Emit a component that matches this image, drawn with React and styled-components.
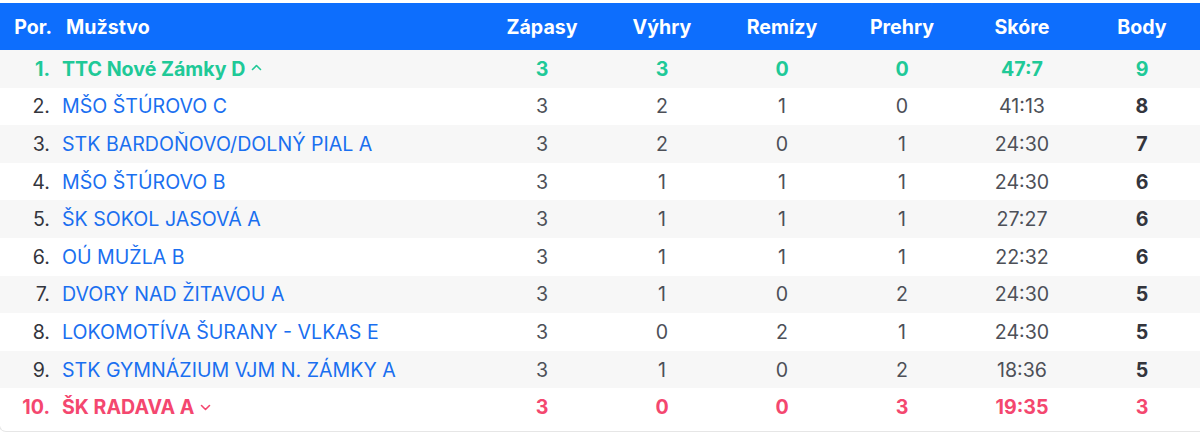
import { memo } from 'react';
import styled, { createGlobalStyle } from 'styled-components';

const GlobalStyle = createGlobalStyle`
    body {
        margin: 0;
        background: #ffffff;
        font-family: Inter, "Noto Sans", sans-serif;
        overflow: hidden;
    }
`;

const COLS = '52px 429px repeat(6, 120px)';

const StyledCard = styled.div`
    width: 1212px;
    margin-top: 3px;
    padding-bottom: 5px;
    border: 1px solid #e6e6e6;
    border-top: none;
    border-radius: 0 0 7px 7px;
    box-sizing: border-box;
    margin-left: -1px;
    overflow: hidden;
`;

const StyledHead = styled.div`
    display: grid;
    grid-template-columns: ${COLS};
    height: 47px;
    align-items: center;
    background-color: #0d6efd;
    color: #ffffff;
    font-weight: 700;
    font-size: 19.6px;
    padding-left: 1px;
`;

const HeadCell = styled.div`
    text-align: ${(p) => p.$align || 'center'};
    padding-right: ${(p) => (p.$align === 'right' ? '1px' : '0')};
    padding-left: ${(p) => (p.$align === 'left' ? '13px' : '0')};
    white-space: nowrap;
`;

const StyledRow = styled.div`
    display: grid;
    grid-template-columns: ${COLS};
    height: 37.6px;
    align-items: center;
    padding-left: 1px;
    font-size: 19.6px;
    background-color: ${(p) => (p.$striped ? '#f7f7f7' : '#ffffff')};
    color: ${(p) => p.$tone || '#4d5058'};
    font-weight: ${(p) => (p.$tone ? 700 : 400)};
`;

const Pos = styled.div`
    text-align: right;
    padding-right: 3px;
    white-space: nowrap;
    color: ${(p) => p.$tone || '#33353d'};
`;

const Team = styled.div`
    padding-left: 9px;
    display: flex;
    align-items: center;
    gap: 6px;
    color: ${(p) => p.$tone || '#1a6ff0'};
    white-space: nowrap;
`;

const Cell = styled.div`
    text-align: center;
`;

const Points = styled.div`
    text-align: center;
    font-weight: 700;
    color: ${(p) => p.$tone || '#33353d'};
`;

const Chevron = ({ up, color }) => (
    <svg width="11" height="7" viewBox="0 0 11 7" style={{ marginTop: up ? -2 : 0 }}>
        <polyline
            points={up ? '1.5,5.5 5.5,1.5 9.5,5.5' : '1.5,1.5 5.5,5.5 9.5,1.5'}
            fill="none"
            stroke={color}
            strokeWidth="1.6"
            strokeLinecap="round"
            strokeLinejoin="round"
        />
    </svg>
);

const GREEN = '#20c997';
const PINK = '#f4476f';

const rows = [
    { pos: 1, team: 'TTC Nové Zámky D', z: 3, v: 3, r: 0, p: 0, s: '47:7', b: 9, tone: GREEN, up: true },
    { pos: 2, team: 'MŠO ŠTÚROVO C', z: 3, v: 2, r: 1, p: 0, s: '41:13', b: 8 },
    { pos: 3, team: 'STK BARDOŇOVO/DOLNÝ PIAL A', z: 3, v: 2, r: 0, p: 1, s: '24:30', b: 7 },
    { pos: 4, team: 'MŠO ŠTÚROVO B', z: 3, v: 1, r: 1, p: 1, s: '24:30', b: 6 },
    { pos: 5, team: 'ŠK SOKOL JASOVÁ A', z: 3, v: 1, r: 1, p: 1, s: '27:27', b: 6 },
    { pos: 6, team: 'OÚ MUŽLA B', z: 3, v: 1, r: 1, p: 1, s: '22:32', b: 6 },
    { pos: 7, team: 'DVORY NAD ŽITAVOU A', z: 3, v: 1, r: 0, p: 2, s: '24:30', b: 5 },
    { pos: 8, team: 'LOKOMOTÍVA ŠURANY - VLKAS E', z: 3, v: 0, r: 2, p: 1, s: '24:30', b: 5 },
    { pos: 9, team: 'STK GYMNÁZIUM VJM N. ZÁMKY A', z: 3, v: 1, r: 0, p: 2, s: '18:36', b: 5 },
    { pos: 10, team: 'ŠK RADAVA A', z: 3, v: 0, r: 0, p: 3, s: '19:35', b: 3, tone: PINK, down: true },
];

const Standings = () => {
    return (
        <StyledCard>
            <StyledHead>
                <HeadCell $align='right'>Por.</HeadCell>
                <HeadCell $align='left'>Mužstvo</HeadCell>
                <HeadCell>Zápasy</HeadCell>
                <HeadCell>Výhry</HeadCell>
                <HeadCell>Remízy</HeadCell>
                <HeadCell>Prehry</HeadCell>
                <HeadCell>Skóre</HeadCell>
                <HeadCell>Body</HeadCell>
            </StyledHead>
            {rows.map((row, i) => (
                <StyledRow key={row.pos} $striped={i % 2 === 0} $tone={row.tone}>
                    <Pos $tone={row.tone}>{row.pos}.</Pos>
                    <Team $tone={row.tone}>
                        {row.team}
                        {row.up && <Chevron up color={row.tone} />}
                        {row.down && <Chevron color={row.tone} />}
                    </Team>
                    <Cell>{row.z}</Cell>
                    <Cell>{row.v}</Cell>
                    <Cell>{row.r}</Cell>
                    <Cell>{row.p}</Cell>
                    <Cell>{row.s}</Cell>
                    <Points $tone={row.tone}>{row.b}</Points>
                </StyledRow>
            ))}
        </StyledCard>
    );
};

const App = () => (
    <>
        <GlobalStyle />
        <Standings />
    </>
);

export default memo(App);
